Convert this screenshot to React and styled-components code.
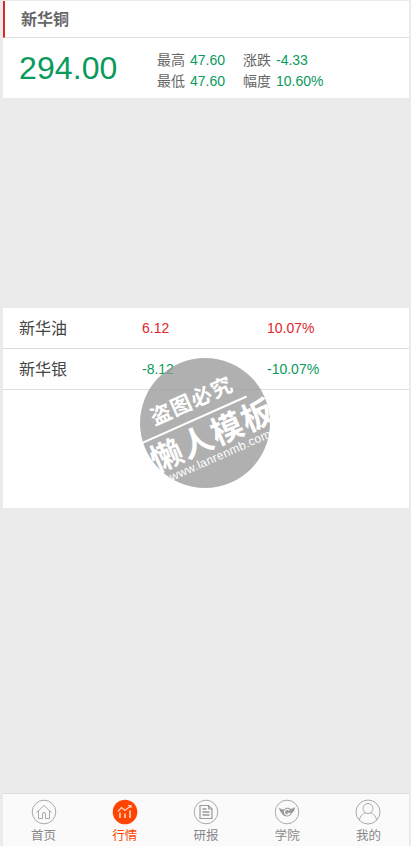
import React from 'react';
import styled, { createGlobalStyle } from 'styled-components';

const GlobalStyle = createGlobalStyle`
  html, body {
    margin: 0;
    padding: 0;
    height: 100%;
    background: #ebebeb;
  }
  body {
    font-family: "Liberation Sans", "Noto Sans CJK SC", sans-serif;
    overflow: hidden;
  }
`;

const Page = styled.div`
  position: relative;
  width: 411px;
  height: 846px;
  box-sizing: border-box;
  padding: 1px 2px 0 3px;
  display: flex;
  flex-direction: column;
  background: #ebebeb;
  overflow: hidden;
`;

const Header = styled.div`
  height: 34px;
  flex: none;
  display: flex;
  align-items: center;
  padding: 0 0 2px 16px;
  background: #fff;
  border-left: 2px solid #e0262c;
  border-bottom: 1px solid #ddd;
  color: #666;
  font-size: 16px;
  font-weight: 700;
`;

const Quote = styled.div`
  height: 60px;
  flex: none;
  display: flex;
  align-items: center;
  padding-left: 16px;
  background: #fff;
`;

const Price = styled.div`
  width: 138px;
  flex: none;
  font-size: 32px;
  letter-spacing: 0.1px;
  color: #0a9a5c;
`;

const Stats = styled.div`
  display: grid;
  grid-template-columns: 86px auto;
  row-gap: 4px;
  padding-top: 5px;
  font-size: 14px;
  line-height: 17px;
`;

const Stat = styled.div`
  color: #666;
  white-space: nowrap;
`;

const StatValue = styled.span`
  color: #0a9a5c;
  margin-left: 5px;
`;

const Gap = styled.div`
  height: 210px;
  flex: none;
`;

const List = styled.div`
  height: 200px;
  flex: none;
  background: #fff;
`;

const Row = styled.div`
  height: 40px;
  display: flex;
  align-items: center;
  padding-left: 16px;
  border-bottom: 1px solid #ddd;
  font-size: 14px;
  color: ${props => (props.$up ? '#e0262c' : '#0a9a5c')};
`;

const RowName = styled.div`
  width: 123px;
  font-size: 16px;
  margin-top: -2px;
  color: #444;
`;

const RowValue = styled.div`
  width: 125px;
`;

const Spacer = styled.div`
  flex: 1;
`;

const TabBar = styled.div`
  height: 52px;
  flex: none;
  display: flex;
  background: #fafafa;
  border-top: 1px solid #ddd;
`;

const Tab = styled.div`
  flex: 1;
  display: flex;
  flex-direction: column;
  align-items: center;
  padding-top: 5px;
  font-size: 12.5px;
  line-height: 18px;
  color: ${props => (props.$active ? '#ff4500' : '#888')};
`;

const TabIcon = styled.svg`
  width: 26px;
  height: 26px;
  margin-bottom: 2px;
  display: block;
`;

const Watermark = styled.div`
  position: absolute;
  left: 140px;
  top: 358px;
  width: 130px;
  height: 130px;
  border-radius: 50%;
  background: rgba(150, 150, 150, 0.75);
  color: #fff;
  pointer-events: none;
`;

const MarkLayer = styled.div`
  position: absolute;
  left: -12px;
  top: 3px;
  width: 154px;
  height: 130px;
  display: flex;
  flex-direction: column;
  align-items: center;
  justify-content: center;
  transform: rotate(-24deg);
  white-space: nowrap;
`;

const MarkTop = styled.div`
  font-size: 21px;
  line-height: 24px;
  font-weight: 700;
  margin-left: -4px;
  letter-spacing: 1px;
`;

const MarkLine = styled.div`
  width: 114px;
  height: 2px;
  background: #fff;
  margin: 5px 0 3px -14px;
`;

const MarkMain = styled.div`
  font-size: 32px;
  line-height: 36px;
  font-weight: 700;
  letter-spacing: 1px;
  margin-left: 6px;
`;

const MarkUrl = styled.div`
  font-size: 12px;
  line-height: 13px;
  letter-spacing: 0.3px;
  margin: -3px 0 0 4px;
`;

const HomeIcon = () => (
  <TabIcon viewBox="0 0 26 26" fill="none" stroke="#aaa" strokeWidth="1">
    <circle cx="13" cy="13" r="11.8" />
    <path d="M5.5 13.5 13 6.5l7.5 7M7.5 12v7.5h4v-4.5a1.5 1.5 0 0 1 3 0v4.5h4V12" />
  </TabIcon>
);

const MarketIcon = () => (
  <TabIcon viewBox="0 0 26 26">
    <circle cx="13" cy="13" r="12.3" fill="#ff4500" />
    <path d="M6 12.500 9.500 8.500l3.500 3 5.500-4.500M16 6.500h3v2.500" fill="none" stroke="#ffd6c6" strokeWidth="1.2" />
    <path d="M8 13.500v5.500M13 14.500v4.500M18 11.500v7.500" fill="none" stroke="#ffd6c6" strokeWidth="1.6" />
  </TabIcon>
);

const ReportIcon = () => (
  <TabIcon viewBox="0 0 26 26" fill="none" stroke="#aaa" strokeWidth="1">
    <circle cx="13" cy="13" r="11.8" />
    <path d="M7 6.500h8.500l3.500 3.500v9.500H7z" stroke="#999" strokeWidth="1.200" />
    <path d="M15.500 6.500V10H19" stroke="#999" />
    <path d="M9.500 10h4M9.500 13h7M9.500 16h7" stroke="#999" strokeWidth="1.300" />
  </TabIcon>
);

const SchoolIcon = () => (
  <TabIcon viewBox="0 0 26 26">
    <circle cx="13" cy="13" r="11.800" fill="none" stroke="#aaa" strokeWidth="1" />
    <path d="M5 8.500c1.500 1.500 3.500 2 5 2 1-1.800 5-2.500 6.500-.5 1.500-.2 3-1 4.500-2-.2 3-1.200 5-3 6-1 2.500-3 3.500-5 3.500s-4.500-1-5.500-3.500C6.500 13 5.200 11 5 8.500z" fill="#999" />
    <path d="M15.500 11.500a2.800 2.800 0 1 0 .3 3h-2.300" fill="none" stroke="#f4f4f4" strokeWidth="1.300" />
  </TabIcon>
);

const MineIcon = () => (
  <TabIcon viewBox="0 0 26 26" fill="none" stroke="#aaa" strokeWidth="1">
    <circle cx="13" cy="13" r="12" />
    <circle cx="13" cy="9.500" r="5" />
    <path d="M4.500 21c.5-4.500 3.500-6.500 6-7M21.500 21c-.5-4.500-3.500-6.500-6-7" />
  </TabIcon>
);

const tabs = [
  { label: '首页', Icon: HomeIcon },
  { label: '行情', Icon: MarketIcon, active: true },
  { label: '研报', Icon: ReportIcon },
  { label: '学院', Icon: SchoolIcon },
  { label: '我的', Icon: MineIcon },
];

const App = () => (
  <Page>
    <GlobalStyle />
    <Header>新华铜</Header>
    <Quote>
      <Price>294.00</Price>
      <Stats>
        <Stat>最高<StatValue>47.60</StatValue></Stat>
        <Stat>涨跌<StatValue>-4.33</StatValue></Stat>
        <Stat>最低<StatValue>47.60</StatValue></Stat>
        <Stat>幅度<StatValue>10.60%</StatValue></Stat>
      </Stats>
    </Quote>
    <Gap />
    <List>
      <Row $up>
        <RowName>新华油</RowName>
        <RowValue>6.12</RowValue>
        <div>10.07%</div>
      </Row>
      <Row>
        <RowName>新华银</RowName>
        <RowValue>-8.12</RowValue>
        <div>-10.07%</div>
      </Row>
    </List>
    <Spacer />
    <TabBar>
      {tabs.map(({ label, Icon, active }) => (
        <Tab key={label} $active={active}>
          <Icon />
          {label}
        </Tab>
      ))}
    </TabBar>
    <Watermark>
      <MarkLayer>
        <MarkTop>盗图必究</MarkTop>
        <MarkLine />
        <MarkMain>懒人模板</MarkMain>
        <MarkUrl>www.lanrenmb.com</MarkUrl>
      </MarkLayer>
    </Watermark>
  </Page>
);

export default App;
